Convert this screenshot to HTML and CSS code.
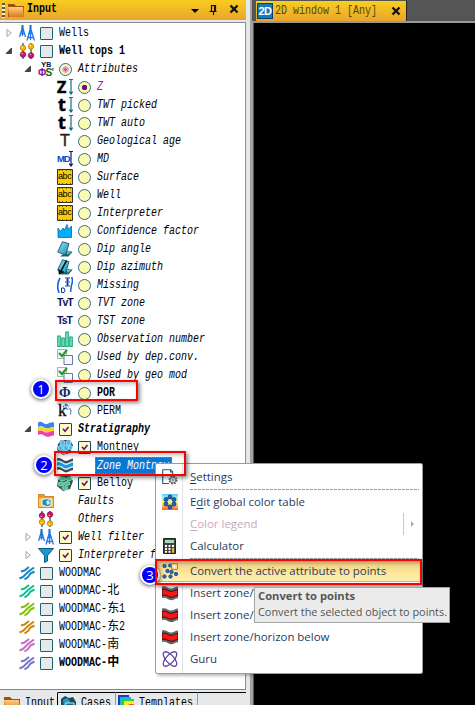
FILE: index.html
```html
<!DOCTYPE html>
<html lang="en">
<head>
<meta charset="utf-8">
<title>Input</title>
<link rel="stylesheet" href="styles.css">
</head>
<body>
<svg class="defs" width="0" height="0">
  <defs>
    <linearGradient id="fold" x1="0" y1="0" x2="0" y2="1"><stop offset="0" stop-color="#ffd080"/><stop offset="1" stop-color="#e07818"/></linearGradient>
    <linearGradient id="rain" x1="0" y1="0" x2="0" y2="1"><stop offset="0" stop-color="#5ac8ff"/><stop offset=".3" stop-color="#b8ffd8"/><stop offset=".6" stop-color="#fff060"/><stop offset="1" stop-color="#ff5a30"/></linearGradient>
    <linearGradient id="slab" x1="0" y1="0" x2="1" y2="1"><stop offset="0" stop-color="#8ee6fa"/><stop offset="1" stop-color="#1c8fb5"/></linearGradient>
    <symbol id="folder" viewBox="0 0 16 16"><path d="M0 2h6l2 2h8v11H0z" fill="#a84a10"/><path d="M0 5h15l1 10H1z" fill="url(#fold)"/></symbol>
    <symbol id="wells" viewBox="0 0 16 16"><path d="M3.500 0v4M11.500 0v4" stroke="#1769d8" stroke-width="2"/><path d="M3.500 2L.5 12M3.500 2l3 10M3.500 2v9M1.500 8.500h4M11.500 3L8 15.500M11.500 3L15.500 15.500M11.500 3v12M9.500 8.500h4M8.500 12.500h6" stroke="#1e78e8" stroke-width="1.300" fill="none"/></symbol>
    <symbol id="tops" viewBox="0 0 16 16"><path d="M4 0v16M12 0v16" stroke="#26808a" stroke-width="1.500"/><g stroke-width=".8"><circle cx="4" cy="5" r="2.700" fill="#ffb400" stroke="#c27600"/><circle cx="12" cy="3.500" r="2.700" fill="#ffb400" stroke="#c27600"/><circle cx="4" cy="11.500" r="2.700" fill="#d0146c" stroke="#840842"/><circle cx="12" cy="12.500" r="2.700" fill="#d0146c" stroke="#840842"/></g><g fill="#fff" opacity=".7"><circle cx="3.300" cy="4" r=".8"/><circle cx="11.300" cy="2.500" r=".8"/><circle cx="3.300" cy="10.500" r=".8"/><circle cx="11.300" cy="11.500" r=".8"/></g></symbol>
    <symbol id="arr" viewBox="0 0 4 16"><path d="M0 .5h4M2 0v14M.3 12.500L2 15l1.700-2.500" stroke="currentColor" stroke-width="1.200" fill="none"/></symbol>
    <symbol id="abc" viewBox="0 0 16 16"><path d="M.5.5h15v15H.5z" fill="#ffcb05" stroke="#333"/><path d="M2.500 1v1M5.500 1v1M9.500 1v1M13.500 1v1M2.500 14v1M5.500 14v1M9.500 14v1M13.500 14v1" stroke="#7b5c00"/></symbol>
    <symbol id="conf" viewBox="0 0 16 16"><path d="M1 14.500V5l2.500 3.500L6 5l1.500 2L10 1.500l1.500 5L14.500 3v11.500z" fill="#00b0ff" stroke="#0c6a9c" stroke-width=".8"/></symbol>
    <symbol id="dip" viewBox="0 0 16 16"><path d="M9 11l6.500-.5-4 5H3z" fill="#1e6177"/><path d="M5.500.7l6.500 2L8.500 14 .7 11z" fill="url(#slab)" stroke="#16566b" stroke-width=".9"/><path d="M10 10l5 1.500-5 2.500" fill="#5cc" stroke="#16566b" stroke-width=".6"/></symbol>
    <symbol id="miss" viewBox="0 0 16 16"><path d="M3 1Q-1 8 2 16M14.500 0q2 3 0 8l-1 7" fill="none" stroke="#1668e0" stroke-width="1.600"/><path d="M4.500 15.500V11H7q2 2 0 4.500zM8 1h5M8 5h5M8 9h5M10.500 1v8M9 3h3M9 7h3" fill="none" stroke="#123c9c"/></symbol>
    <symbol id="bars" viewBox="0 0 16 16"><path d="M.8 5h2.400v10.500H.8zM4.800 7h2.400v8.500H4.800zM8.800 1h2.400v14.500H8.800zM12.800 6h2.400v9.500h-2.400z" fill="#a2f4d8" stroke="#11a97c" stroke-width="1.200"/></symbol>
    <symbol id="used" viewBox="0 0 16 16"><path d="M.5.500h9v9h-9z" fill="#f2f5fa" stroke="#a9b1c0"/><path d="M2 4l3 3 5-6" stroke="#229d22" stroke-width="2.200" fill="none"/><path d="M7 6.500h8.500v9H7z" fill="#f4f8ff" stroke="#68779b"/></symbol>
    <symbol id="waves" viewBox="0 0 16 16"><path d="M0 1.500c4-2.500 6 2.500 9 1.500s4-2 7-1.500v4.500c-3-.5-4 2-7 1.500S4 4 0 6z" fill="#3584f0"/><path d="M0 6c4-2 6 2 9 1.500S13 5.500 16 6v4c-3-.5-4 2-7 1.500S4 8 0 10z" fill="#ffd31c"/><path d="M0 10c4-2 6 2 9 1.500s4-2 7-1.500v4.500c-3-.5-4 1.800-7 1.300S4 12 0 14z" fill="#ed3fae"/></symbol>
    <symbol id="zone" viewBox="0 0 16 16"><path d="M0 1.500C4-.5 6 4 9 4s4-2.500 7-2.500V13c-3 0-4 2.500-7 2.500S4 11 0 13z" fill="#424a50"/><path d="M0 4C4 2 6 6.500 9 6.500S13 4 16 4v6.500c-3 0-4 2.500-7 2.500S4 8.500 0 10.500z" fill="#d9f2fb"/><path d="M0 5.500C4 3.500 6 8 9 8s4-2.500 7-2.500V9c-3 0-4 2.500-7 2.500S4 7 0 9z" fill="#169bdc"/></symbol>
    <symbol id="redzone" viewBox="0 0 16 16"><path d="M0 1.500C4 0 6 3.500 9 3.500S13 1.500 16 1.500v11.700c-3 0-4 2-7 2S4 11.700 0 13.200z" fill="#666"/><path d="M0 4.500C4 3 6 6.300 9 6.300S13 4.500 16 4.500v6c-3 0-4 1.800-7 1.800S4 9 0 10.500z" fill="#ff1414" stroke="#111" stroke-width=".9"/></symbol>
    <symbol id="horb" viewBox="0 0 16 16"><path d="M4 1h9l3 5-3 8-7 2-6-5 1-6z" fill="#35505b"/><g fill="#42bdf0" stroke="#d8f4ff" stroke-width=".6"><circle cx="5.500" cy="4" r="2.600"/><circle cx="11.500" cy="4" r="2.600"/><circle cx="3.500" cy="9" r="2.400"/><circle cx="9" cy="9" r="2.800"/><circle cx="13.500" cy="8.500" r="2"/><circle cx="7" cy="13" r="2"/></g></symbol>
    <symbol id="horg" viewBox="0 0 16 16"><path d="M4 1h9l3 5-3 8-7 2-6-5 1-6z" fill="#35504a"/><g fill="#35cb98" stroke="#c8eedd" stroke-width=".6"><ellipse cx="5.500" cy="4" rx="3" ry="2"/><ellipse cx="12" cy="4" rx="2.600" ry="2"/><ellipse cx="4" cy="9" rx="3" ry="2"/><ellipse cx="10" cy="8.500" rx="2.800" ry="2"/><ellipse cx="8" cy="13" rx="3" ry="1.800"/></g></symbol>
    <symbol id="faults" viewBox="0 0 16 16"><path d="M0 1.500h6l1 2h9v11H0z" fill="#e99b2d" stroke="#b76b12" stroke-width=".7"/><path d="M1 5h14v9H1z" fill="#ffc860"/><path d="M4 7l4-1.500 5 1v5.500l-3 2-6-2z" fill="#238ab5" stroke="#e9faff"/><path d="M8 8l3-1 1 4-3 1z" fill="#c4efff"/></symbol>
    <symbol id="funnel" viewBox="0 0 16 16"><path d="M.5 1.500h15l-6 7v5.500l-3 1.500v-7z" fill="#159bd0" stroke="#0d5b82"/></symbol>
    <symbol id="lines" viewBox="0 0 16 16"><path d="M2 6.500l3.500-1L10 2M.5 13.500L4 12l5-5 6-4.500M5.500 14.500L9 12l2.500-3.500 4-2" fill="none" stroke="currentColor" stroke-width="2"/></symbol>
    <symbol id="cases" viewBox="0 0 16 16"><path d="M1 4l4-3 4 2 4-1 3 5v9H1z" fill="#0d5068"/><path d="M3 5l4-2 3 3v5H4z" fill="#2d9cc4"/><path d="M6 8h8v8H4z" fill="#146b8a" stroke="#fff" stroke-width=".8"/></symbol>
    <symbol id="templ" viewBox="0 0 16 16"><path d="M0 0h11v11H0z" fill="#1c40bb"/><path d="M2 2h11v11H2z" fill="#19b7dd"/><path d="M4 4h12v12H4z" fill="#22d444"/><path d="M6 6h10v10H6z" fill="#ffe722"/><path d="M11 9h5v7h-7z" fill="#ff4a18"/></symbol>
    <symbol id="set" viewBox="0 0 16 16"><path d="M7 14.500H.7V.7h8l2 2V5M8.500.7V3h2" fill="none" stroke="#176873" stroke-width="1.100"/><circle cx="11" cy="11" r="3.600" fill="#eee" stroke="#666" stroke-width="1.800" stroke-dasharray="1.700 1.100"/><circle cx="11" cy="11" r="2.900" fill="#fff" stroke="#666"/><circle cx="11" cy="11" r="1" fill="none" stroke="#555" stroke-width=".8"/></symbol>
    <symbol id="ctab" viewBox="0 0 16 16"><path d="M0 0h16v16H0z" fill="url(#rain)"/><g fill="#2463c6" stroke="#0c2e76" stroke-width=".8"><circle cx="8" cy="3" r="2"/><circle cx="4" cy="5.500" r="2"/><circle cx="12" cy="5.500" r="2"/><circle cx="4" cy="10" r="2"/><circle cx="12" cy="10" r="2"/><circle cx="8" cy="13" r="2"/></g></symbol>
    <symbol id="calc" viewBox="0 0 16 16"><path d="M1.500.5h12v15h-12z" fill="#444" stroke="#222"/><path d="M3 2h9v3H3z" fill="#a6ddb8"/><path d="M3 7h2v2H3zM6.500 7h2v2h-2zM10 7h2v2h-2zM3 10h2v2H3zM6.500 10h2v2h-2zM3 13h2v1.700H3zM6.500 13h2v1.700h-2z" fill="#fff"/><path d="M10 10h2v4.700h-2z" fill="#ffb31a"/></symbol>
    <symbol id="pts" viewBox="0 0 16 16"><g fill="#2b6bc8" stroke="#163c78" stroke-width=".8"><circle cx="2.500" cy="3" r="1.700"/><circle cx="8" cy="2.500" r="1.500"/><circle cx="5.500" cy="8" r="1.700"/><circle cx="9.500" cy="9" r="1.700"/><circle cx="2.500" cy="13.500" r="1.700"/><circle cx="8.500" cy="13.500" r="1.700"/><circle cx="14" cy="11" r="1.700"/></g><path d="M9.500.5h6v6h-6z" fill="#ffd65c" stroke="#b98b17"/><path d="M12.500 1.500v4M10.500 3.500h4" stroke="#fff"/></symbol>
    <symbol id="guru" viewBox="0 0 16 16"><g fill="none" stroke="#60459f" stroke-width="1.300"><ellipse cx="8" cy="8" rx="9" ry="4" transform="rotate(48 8 8)"/><ellipse cx="8" cy="8" rx="9" ry="4" transform="rotate(-48 8 8)"/></g></symbol>
    <symbol id="perm" viewBox="0 0 16 16"><path d="M6 4l3-3 3 3M9 1v5h4.500q1 3-.5 6" fill="none" stroke="#2868b6" stroke-width="1.100" stroke-dasharray="2 .6"/></symbol>
    <symbol id="open" viewBox="0 0 8 8"><path d="M6.500 1v5.500H1z" fill="#444" stroke="#222" stroke-width=".7"/></symbol>
    <symbol id="shut" viewBox="0 0 8 8"><path d="M2 .5v7L6.300 4z" fill="#fff" stroke="#999" stroke-width=".9"/></symbol>
    <symbol id="tick" viewBox="0 0 13 13"><path d="M3.500 5.500L6 8.500l4-5" fill="none" stroke="#701070" stroke-width="1.900"/></symbol>
    <symbol id="x" viewBox="0 0 10 10"><path d="M1.500 1.500l7 7M8.500 1.500l-7 7" stroke="#111" stroke-width="2.300"/></symbol>
  </defs>
</svg>
<div class="app">
  <section class="panel">
    <header class="head"><i class="grip"></i><svg class="hfold"><use href="#folder"/></svg><b class="m">Input</b>
      <span class="tools"><svg width="8" height="4"><path d="M0 0h8L4 4z"/></svg><svg width="8" height="10"><path d="M2.500 6V.5h4V6M.5 6.500h7M4.500 6v4M5.500 1v5" fill="none" stroke="#111" stroke-width="1.200"/></svg><svg width="10" height="10"><use href="#x"/></svg></span>
    </header>
    <div class="tree">
      <div class="row"><svg class="tw"><use href="#shut"/></svg><svg class="ic"><use href="#wells"/></svg><i class="box"></i><span class="m">Wells</span></div>
      <div class="row"><svg class="tw"><use href="#open"/></svg><svg class="ic"><use href="#tops"/></svg><i class="box"></i><span class="m b">Well tops 1</span></div>
      <div class="row l1"><svg class="tw"><use href="#open"/></svg><span class="ic attr"><i>Y<small>B</small></i><b>Φ<em>S'</em></b></span><i class="dot part"></i><span class="m i">Attributes</span></div>
      <div class="row l2"><span class="ic big">Z<svg><use href="#arr"/></svg></span><i class="dot on"></i><span class="m i mag">Z</span></div>
      <div class="row l2"><span class="ic big tt">t<svg><use href="#arr"/></svg></span><i class="dot"></i><span class="m i">TWT picked</span></div>
      <div class="row l2"><span class="ic big tt">t<svg><use href="#arr"/></svg></span><i class="dot"></i><span class="m i">TWT auto</span></div>
      <div class="row l2"><span class="ic tee">T</span><i class="dot"></i><span class="m i">Geological age</span></div>
      <div class="row l2"><span class="ic md">MD<svg><use href="#arr"/></svg></span><i class="dot"></i><span class="m i">MD</span></div>
      <div class="row l2"><span class="ic abc"><svg><use href="#abc"/></svg><i>abc</i></span><i class="dot"></i><span class="m i">Surface</span></div>
      <div class="row l2"><span class="ic abc"><svg><use href="#abc"/></svg><i>abc</i></span><i class="dot"></i><span class="m i">Well</span></div>
      <div class="row l2"><span class="ic abc"><svg><use href="#abc"/></svg><i>abc</i></span><i class="dot"></i><span class="m i">Interpreter</span></div>
      <div class="row l2"><svg class="ic"><use href="#conf"/></svg><i class="dot"></i><span class="m i">Confidence factor</span></div>
      <div class="row l2"><svg class="ic"><use href="#dip"/></svg><i class="dot"></i><span class="m i">Dip angle</span></div>
      <div class="row l2"><svg class="ic"><use href="#dip"/><path d="M9.500 1.500L3.500 13M2 10.500l.5 4 4-2" fill="none" stroke="#000" stroke-width="1.500"/></svg><i class="dot"></i><span class="m i">Dip azimuth</span></div>
      <div class="row l2"><svg class="ic"><use href="#miss"/></svg><i class="dot"></i><span class="m i">Missing</span></div>
      <div class="row l2"><span class="ic tvt">TvT</span><i class="dot"></i><span class="m i">TVT zone</span></div>
      <div class="row l2"><span class="ic tvt">TsT</span><i class="dot"></i><span class="m i">TST zone</span></div>
      <div class="row l2"><svg class="ic"><use href="#bars"/></svg><i class="dot"></i><span class="m i">Observation number</span></div>
      <div class="row l2"><svg class="ic"><use href="#used"/></svg><i class="dot"></i><span class="m i">Used by dep.conv.</span></div>
      <div class="row l2"><svg class="ic"><use href="#used"/></svg><i class="dot"></i><span class="m i">Used by geo mod</span></div>
      <div class="row l2"><span class="ic phi">Φ</span><i class="dot"></i><span class="m b">POR</span></div>
      <div class="row l2"><span class="ic kay">k<svg><use href="#perm"/></svg></span><i class="dot"></i><span class="m">PERM</span></div>
      <div class="row l1"><svg class="tw"><use href="#open"/></svg><svg class="ic"><use href="#waves"/></svg><i class="box ck"><svg><use href="#tick"/></svg></i><span class="m b i">Stratigraphy</span></div>
      <div class="row l2"><svg class="ic"><use href="#horb"/></svg><i class="box ck"><svg><use href="#tick"/></svg></i><span class="m">Montney</span></div>
      <div class="row l2"><svg class="ic"><use href="#zone"/></svg><i class="none"></i><span class="sel"><span class="m i">Zone Montney</span></span></div>
      <div class="row l2"><svg class="ic"><use href="#horg"/></svg><i class="box ck"><svg><use href="#tick"/></svg></i><span class="m">Belloy</span></div>
      <div class="row l1"><i class="tw"></i><svg class="ic"><use href="#faults"/></svg><i class="none"></i><span class="m i">Faults</span></div>
      <div class="row l1"><i class="tw"></i><svg class="ic flip"><use href="#tops"/></svg><i class="none"></i><span class="m i">Others</span></div>
      <div class="row l1"><svg class="tw"><use href="#shut"/></svg><svg class="ic"><use href="#wells"/></svg><i class="box ck"><svg><use href="#tick"/></svg></i><span class="m i">Well filter</span></div>
      <div class="row l1"><svg class="tw"><use href="#shut"/></svg><svg class="ic"><use href="#funnel"/></svg><i class="box ck"><svg><use href="#tick"/></svg></i><span class="m i">Interpreter filter</span></div>
      <div class="row"><i class="tw"></i><svg class="ic c1"><use href="#lines"/></svg><i class="box"></i><span class="m">WOODMAC</span></div>
      <div class="row"><i class="tw"></i><svg class="ic c2"><use href="#lines"/></svg><i class="box"></i><span class="m">WOODMAC-<span class="cj">北</span></span></div>
      <div class="row"><i class="tw"></i><svg class="ic c3"><use href="#lines"/></svg><i class="box"></i><span class="m">WOODMAC-<span class="cj">东</span>1</span></div>
      <div class="row"><i class="tw"></i><svg class="ic c4"><use href="#lines"/></svg><i class="box"></i><span class="m">WOODMAC-<span class="cj">东</span>2</span></div>
      <div class="row"><i class="tw"></i><svg class="ic c5"><use href="#lines"/></svg><i class="box"></i><span class="m">WOODMAC-<span class="cj">南</span></span></div>
      <div class="row"><i class="tw"></i><svg class="ic c6"><use href="#lines"/></svg><i class="box"></i><span class="m b">WOODMAC-<span class="cj">中</span></span></div>
    </div>
    <footer class="tabs">
      <span class="tab t1"><svg><use href="#folder"/></svg><span class="m">Input</span></span>
      <span class="tab t2"><svg><use href="#cases"/></svg><span class="m">Cases</span></span>
      <span class="tab t3"><svg><use href="#templ"/></svg><span class="m">Templates</span></span>
    </footer>
  </section>
  <i class="split"></i>
  <section class="view">
    <div class="bar"><span class="vtab"><b class="two">2D</b><span class="m">2D window 1 [Any]</span><svg width="10" height="10"><use href="#x"/></svg></span></div>
    <div class="canvas"></div>
  </section>
</div>

<div class="menu">
  <div class="it"><svg><use href="#set"/></svg><span><u>S</u>ettings</span></div>
  <hr>
  <div class="it"><svg><use href="#ctab"/></svg><span>E<u>d</u>it global color table</span></div>
  <div class="it off"><i class="none"></i><span><u>C</u>olor legend</span><b class="sub"></b></div>
  <div class="it"><svg><use href="#calc"/></svg><span>Calculator</span></div>
  <hr>
  <div class="it hot"><svg><use href="#pts"/></svg><span>Convert the active attribute to points</span></div>
  <div class="it"><svg><use href="#redzone"/></svg><span>Insert zone/horizon</span></div>
  <div class="it"><svg><use href="#redzone"/></svg><span>Insert zone/horizon</span></div>
  <div class="it"><svg><use href="#redzone"/></svg><span>Insert zone/horizon below</span></div>
  <div class="it"><svg><use href="#guru"/></svg><span>Guru</span></div>
</div>
<div class="num n1">1</div><div class="num n2">2</div><div class="num n3">3</div>
<div class="mark m1"></div><div class="mark m2"></div><div class="mark m3"></div>
<div class="tip"><b>Convert to points</b><span>Convert the selected object to points.</span></div>
</body>
</html>
```
FILE: styles.css
```css
* { box-sizing: border-box; }
body { margin: 0; width: 475px; height: 705px; overflow: hidden; position: relative; background: #e7e8ea; font: 12px "Liberation Sans", sans-serif; color: #000; }
.defs { position: absolute; }
.app { display: flex; height: 705px; }
.panel { width: 246px; display: flex; flex-direction: column; flex: none; }
.m { font: 12px/18px "Liberation Mono", "Noto Sans CJK SC", monospace; white-space: pre; transform: scaleX(.833); transform-origin: 0 50%; display: block; flex: none; }
.b, b.m { font-weight: bold; }
.i { font-style: italic; }
.mag { color: #c000c0; }
.cj { display: inline-block; width: 14.4px; line-height: 14px; transform: scaleX(1.2); transform-origin: 0 50%; }
.head { height: 20px; flex: none; display: flex; align-items: center; background: linear-gradient(#f8cc20, #eaa42c); }
.grip { width: 3px; height: 15px; margin: 0 3px 0 2px; background: repeating-linear-gradient(#555 0 2px, #fff0b0 2px 4px); }
.hfold { width: 16px; height: 16px; margin-right: 3px; }
.head .m { width: 50px; padding-bottom: 2px; }
.tools { margin-left: auto; display: flex; align-items: center; gap: 12px; padding-right: 7px; }
.tools svg:first-child { position: relative; top: 1px; left: 2px; }
.tools svg:last-child { position: relative; top: -1px; }
.tree { margin-top: 2px; padding-top: 1px; border-top: 1px solid #888c92; border-right: 1px solid #8d8f96; border-bottom: 1px solid #858585; background: #fff; height: 668px; flex: none; overflow: hidden; }
.row { height: 18px; display: flex; align-items: center; }
.l1 { padding-left: 19px; }
.l2 { padding-left: 57px; }
.tw { width: 8px; height: 8px; margin: 0 6px 0 5px; flex: none; }
.ic { width: 16px; height: 16px; flex: none; margin-right: 5px; position: relative; }
.flip { transform: scaleY(-1); }
.box, .dot, .none { width: 13px; height: 13px; flex: none; margin-right: 6px; }
.box { border: 1px solid #1c6170; background: #e6e9e9; border-radius: 1px; }
.ck { background: #fdfcc8; border-color: #174c5e; }
.ck svg { width: 11px; height: 11px; display: block; }
.dot { border: 1px solid #2b7080; border-radius: 50%; background: #fbfab4; }
.on { background: radial-gradient(circle, #7a0a7a 0 2.5px, #fbfab4 3px); }
.part { background: radial-gradient(circle, #c050a0 0 1px, #e8a0c4 1.5px 3px, #fbfab4 3.5px); }
.attr i, .attr b { display: block; font: bold 8px/7px "Liberation Sans", sans-serif; color: #113; padding-left: 3px; }
.attr small { font-size: 7px; }
.attr b { font-size: 10px; line-height: 9px; color: #8a1090; padding: 0; white-space: nowrap; letter-spacing: -.7px; }
.attr em { font-style: normal; color: #165c24; }
.big { display: flex; justify-content: space-between; font: bold 16px/16px "Open Sans", sans-serif; -webkit-text-stroke: .5px #000; }
.big svg, .md svg { width: 4px; height: 16px; flex: none; color: #0e7184; }
.tt { font-size: 18px; line-height: 14px; padding-left: 1px; }
.tee { font: 16px/16px "Liberation Sans", sans-serif; padding-left: 3px; color: #222; -webkit-text-stroke: .4px #222; }
.md { display: flex; font: bold 9.5px/15px "Liberation Sans", sans-serif; letter-spacing: -1.2px; color: #0549c8; justify-content: space-between; }
.md svg { color: #10187c; }
.abc svg { width: 16px; height: 16px; display: block; }
.abc i { position: absolute; left: 1px; top: 1px; font: 9px/13px "Liberation Sans", sans-serif; letter-spacing: -.4px; }
.tvt { font: bold 10.5px/15px "Liberation Sans", sans-serif; color: #10105f; letter-spacing: -1px; }
.phi { font: bold 14px/16px "Liberation Serif", serif; color: #142a66; padding-left: 2px; }
.kay { font: 17px/15px "Liberation Serif", serif; -webkit-text-stroke: .4px #222; padding-left: 1px; }
.kay svg { position: absolute; left: 0; top: 0; width: 16px; height: 16px; }
.sel { width: 77px; height: 17px; margin-left: -2px; padding-left: 2px; background: #0878d7; outline: 1px dotted #d87a1c; outline-offset: -1px; color: #fff; overflow: hidden; }
.c1 { color: #1585c8; } .c2 { color: #12bd8c; } .c3 { color: #82bd0b; } .c4 { color: #cc8610; } .c5 { color: #c36bc3; } .c6 { color: #7777c6; }
.tabs { margin-top: 2px; height: 13px; display: flex; overflow: hidden; }
.tab { display: flex; height: 20px; padding: 2px 0 0 4px; gap: 5px; border-top: 1px solid #000; border-right: 1px solid #999; flex: none; }
.tab svg { width: 16px; height: 16px; flex: none; }
.tab .m { width: 30px; line-height: 17px; }
.t1 { width: 58px; border-top-color: #e7e8ea; border-right-color: #000; }
.t2 { width: 58px; padding-left: 2px; }
.t3 { width: 82px; padding-left: 2px; }
.tabs::after { content: ""; flex: 1; border-top: 1px solid #000; }
.split { width: 8px; flex: none; background: linear-gradient(90deg, #e5e8ea 0 4px, #a2a2a2 4px 7px, #555 7px); }
.view { flex: 1; display: flex; flex-direction: column; }
.bar { height: 23px; flex: none; background: #555; border-bottom: 2px solid #999; margin-left: -2px; padding: 1px 0 0 4px; }
.vtab { width: 151px; height: 20px; display: flex; align-items: center; background: linear-gradient(#f8cf20, #eaa42c); padding-left: 1px; border-right: 1px solid #222; color: #4e4a10; }
.two { width: 16px; height: 16px; background: #147cb8; border: 1px solid #073f70; color: #fff; font: bold 11px/14px "Liberation Sans", sans-serif; text-align: center; letter-spacing: -.5px; margin-right: 2px; }
.vtab .m { width: 116px; }
.canvas { flex: 1; background: #000; }
.menu { position: absolute; left: 155px; top: 463px; width: 268px; height: 211px; border: 1px solid #989ca3; border-radius: 2px; background: linear-gradient(90deg, #fff 26px, #dfe2e6 26px 27px, #fff 27px); padding-top: 2px; box-shadow: 2px 2px 3px #0004; font: 11.45px/22px "Open Sans", sans-serif; color: #1f3b5f; }
.it { height: 22px; display: flex; align-items: center; padding-left: 6px; position: relative; }
.it svg, .it .none { width: 16px; height: 16px; flex: none; margin-right: 12px; }
.it span { white-space: nowrap; }
.it u { text-underline-offset: 2px; text-decoration-thickness: 1px; }
.menu hr { margin: 1px 3px 1px 34px; border: 0; height: 1px; background: repeating-linear-gradient(90deg, #999 0 3px, #fff 3px 4px); }
.off { color: #c8a9b7; }
.sub { margin-left: auto; width: 19px; height: 22px; border-left: 1px solid #efcb4e; }
.sub::after { content: ""; display: block; margin: 8px 0 0 7px; width: 0; border: 3px solid transparent; border-left-color: #c3a1b0; border-right: 0; }
.hot { background: linear-gradient(#e8cf83, #ffe79a 60%, #fff0b8); box-shadow: inset 0 0 0 1px #e0b64e; }
.tip { position: absolute; left: 254px; top: 587px; width: 196px; height: 36px; background: #ebebeb; border: 1px solid #a5a5a5; padding: 0 0 0 3px; font: 11px/16px "Open Sans", sans-serif; color: #555; white-space: nowrap; }
.tip b, .tip span { display: block; }
.tip b { font-size: 11.2px; }
.tip span { font-size: 10.9px; }
.mark { position: absolute; border: 2px solid #f00; box-shadow: 2px 2px 4px #0007, inset 2px 2px 4px #0004; }
.m1 { left: 55px; top: 380px; width: 83px; height: 21px; }
.m2 { left: 54px; top: 451px; width: 132px; height: 25px; }
.m3 { left: 155px; top: 559px; width: 267px; height: 26px; }
.num { position: absolute; width: 20px; height: 20px; border: 2px solid #fff; border-radius: 50%; background: #00f; color: #fff; font: 13px/16px "Open Sans", sans-serif; text-align: center; box-shadow: 0 1px 4px #000a; }
.n1 { left: 31px; top: 379px; }
.n2 { left: 34px; top: 455px; }
.n3 { left: 140px; top: 565px; }
```
